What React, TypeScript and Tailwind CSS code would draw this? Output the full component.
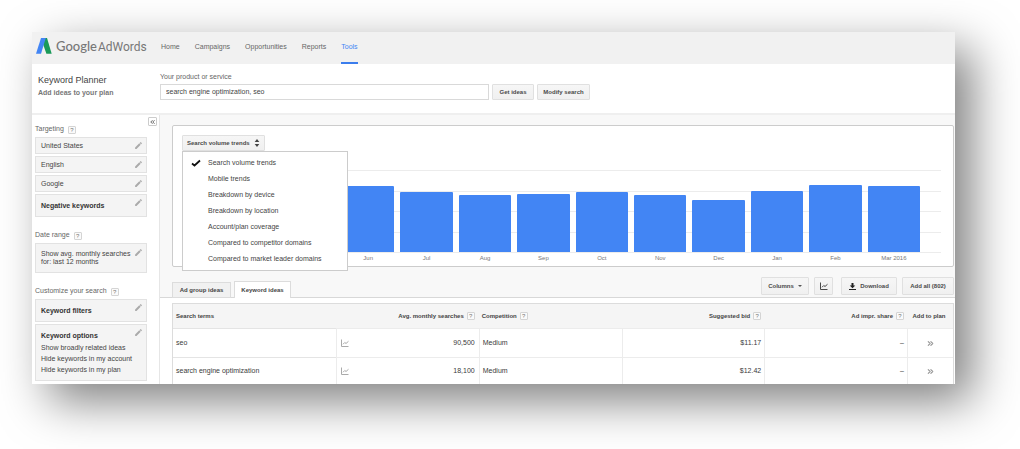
import React from "react";
import { ChevronsLeft, ChevronsRight } from "lucide-react";
import { MdEdit } from "react-icons/md";

const navItems = ["Home", "Campaigns", "Opportunities", "Reports", "Tools"];

const menuItems = [
  "Search volume trends",
  "Mobile trends",
  "Breakdown by device",
  "Breakdown by location",
  "Account/plan coverage",
  "Compared to competitor domains",
  "Compared to market leader domains",
];

const trendData = [
  { month: "Jun", value: 81 },
  { month: "Jul", value: 73 },
  { month: "Aug", value: 70 },
  { month: "Sep", value: 71 },
  { month: "Oct", value: 73 },
  { month: "Nov", value: 70 },
  { month: "Dec", value: 64 },
  { month: "Jan", value: 75 },
  { month: "Feb", value: 82 },
  { month: "Mar 2016", value: 81 },
];

const keywordRows = [
  { term: "seo", searches: "90,500", competition: "Medium", bid: "$11.17" },
  {
    term: "search engine optimization",
    searches: "18,100",
    competition: "Medium",
    bid: "$12.42",
  },
];

const buttonStyle =
  "flex items-center justify-center border border-[#e0e0e0] bg-linear-to-b from-[#f6f6f6] to-[#f0f0f0] text-[6px] font-bold text-[#4a4a4a] rounded-[1px]";

function AdWordsLogo() {
  return (
    <svg viewBox="0 0 16 16" className="h-4 w-4" aria-hidden="true">
      <path d="M6.500 0H11l4.700 15.800H10.400L7 6z" fill="#1b9a59" />
      <path d="M5 0h4.800L5 15.800H0z" fill="#4285f4" />
    </svg>
  );
}

function LineChartIcon({ class_name }: { class_name: string }) {
  return (
    <svg viewBox="0 0 16 16" className={class_name} fill="none" stroke="currentColor" aria-hidden="true">
      <path d="M1 1v14h14" strokeWidth="2" />
      <path d="M4 10.500 7.500 7l2.500 2L15 4.500" strokeWidth="2" />
    </svg>
  );
}

function HelpBadge({ label }: { label: string }) {
  return (
    <button
      type="button"
      aria-label={`Help: ${label}`}
      className="inline-flex h-2 w-2 shrink-0 items-center justify-center rounded-[1px] border border-[#d4d4d4] bg-[#fafafa] text-[6px] leading-none font-normal text-[#777]"
    >
      ?
    </button>
  );
}

function SideTitle({ text, class_name = "" }: { text: string; class_name?: string }) {
  return (
    <h3 className={`flex h-[15px] items-center gap-1 text-[#666] ${class_name}`}>
      {text}
      <HelpBadge label={text} />
    </h3>
  );
}

function SideCard({
  label,
  class_name,
  children,
}: {
  label: string;
  class_name: string;
  children: React.ReactNode;
}) {
  return (
    <div
      className={`flex items-start justify-between border border-[#e2e2e2] bg-[#f4f4f4] pl-[5px] pr-[3px] ${class_name}`}
    >
      <div>{children}</div>
      <button type="button" aria-label={`Edit ${label}`} className="mt-[3px] shrink-0">
        <MdEdit className="h-[9px] w-[9px] text-[#aaa]" />
      </button>
    </div>
  );
}

function TopBar() {
  return (
    <header className="flex h-8 items-stretch bg-[#f1f1f1]">
      <a href="#" className="flex w-[129px] shrink-0 items-center gap-1 pl-1 pb-1 text-[#777]">
        <AdWordsLogo />
        <span className="flex items-baseline gap-px whitespace-nowrap text-[12px] leading-4">
          <span className="font-['Lato'] text-[13px] font-medium">Google</span>
          <span className="font-['Roboto']">AdWords</span>
        </span>
      </a>
      <nav className="flex items-stretch gap-[15px]">
        {navItems.map((item) => (
          <a
            key={item}
            href="#"
            className={`flex items-center border-b-2 pt-px pb-px ${
              item === "Tools" ? "border-[#3b7ded] text-[#4285f4]" : "border-transparent text-[#666]"
            }`}
          >
            {item}
          </a>
        ))}
      </nav>
    </header>
  );
}

function SearchBar() {
  return (
    <section className="flex h-[51px] border-b-2 border-[#efefef] bg-white">
      <div className="w-32 shrink-0 pl-[6px] pt-[10px]">
        <h1 className="text-[9px] leading-3 text-[#444]">Keyword Planner</h1>
        <h2 className="mt-[2px] leading-[10px] font-bold text-[#777]">Add ideas to your plan</h2>
      </div>
      <form className="flex-1 pt-2" onSubmit={(e) => e.preventDefault()}>
        <label htmlFor="product" className="block h-3 leading-[10px] text-[#666]">
          Your product or service
        </label>
        <div className="flex h-4 items-stretch gap-[3px]">
          <input
            id="product"
            type="text"
            defaultValue="search engine optimization, seo"
            className="w-[329px] border border-[#d9d9d9] bg-white px-[5px] text-[7px] text-[#444]"
          />
          <button type="submit" className={`${buttonStyle} w-[42px]`}>
            Get ideas
          </button>
          <button type="button" className={`${buttonStyle} w-[53px]`}>
            Modify search
          </button>
        </div>
      </form>
    </section>
  );
}

function Sidebar() {
  return (
    <aside className="flex w-32 shrink-0 flex-col border-r border-[#e6e6e6] bg-white pl-[3px] pr-[2px] pt-[2px] pb-[2px]">
      <button
        type="button"
        aria-label="Collapse sidebar"
        className="flex h-[9px] w-[9px] items-center justify-center self-end rounded-[1px] border border-[#ccc] text-[#555]"
      >
        <ChevronsLeft className="h-2 w-2" strokeWidth={3} />
      </button>
      <div className="mr-[10px]">
        <SideTitle text="Targeting" class_name="-mt-1" />
        <div className="flex flex-col gap-[2px]">
          {["United States", "English", "Google"].map((item) => (
            <SideCard key={item} label={item} class_name="h-[17px] leading-[15px]">
              {item}
            </SideCard>
          ))}
          <SideCard label="Negative keywords" class_name="h-[23px] leading-[21px] font-bold text-[#333]">
            Negative keywords
          </SideCard>
        </div>

        <SideTitle text="Date range" class_name="mt-[11px]" />
        <SideCard label="date range" class_name="h-[30px] pt-px leading-2">
          <p className="pt-[5px]">
            Show avg. monthly searches
            <br />
            for: last 12 months
          </p>
        </SideCard>

        <SideTitle text="Customize your search" class_name="mt-[11px]" />
        <div className="flex flex-col gap-[2px]">
          <SideCard label="keyword filters" class_name="h-[23px] leading-[21px] font-bold text-[#333]">
            Keyword filters
          </SideCard>
          <SideCard label="keyword options" class_name="h-[57px] leading-[11px]">
            <h4 className="pt-[5px] leading-3 font-bold text-[#333]">Keyword options</h4>
            <p>Show broadly related ideas</p>
            <p>Hide keywords in my account</p>
            <p>Hide keywords in my plan</p>
          </SideCard>
        </div>
      </div>
    </aside>
  );
}

function TrendMenu() {
  return (
    <div className="relative w-fit">
      <button type="button" aria-haspopup="menu" aria-expanded="true" className={`${buttonStyle} h-4 gap-1 px-1`}>
        Search volume trends
        <svg viewBox="0 0 8 12" className="h-2 w-[6px]" fill="#444" aria-hidden="true">
          <path d="M4 0 7.500 4.500H.5zM4 12 .5 7.500h7z" />
        </svg>
      </button>
      <ul
        role="menu"
        className="absolute left-0 top-full z-10 w-[166px] border border-[#ccc] bg-white py-[3px] text-[#444]"
      >
        {menuItems.map((item, key) => (
          <li key={item} role="none">
            <button
              type="button"
              role="menuitemradio"
              aria-checked={key === 0}
              className="flex h-4 w-full items-center text-left"
            >
              <span className="w-[25px] pl-2">
                {key === 0 && (
                  <svg viewBox="0 0 10 8" className="h-2 w-[10px]" fill="none" stroke="#111" aria-hidden="true">
                    <path d="M1 4.500 3.500 6.500 9 1.500" strokeWidth="1.800" />
                  </svg>
                )}
              </span>
              {item}
            </button>
          </li>
        ))}
      </ul>
    </div>
  );
}

function TrendChart() {
  return (
    <div className="relative mt-[19px] mr-3">
      {/* grid lines run behind the bars */}
      <div className="absolute inset-x-0 top-0 flex h-[83px] flex-col justify-between">
        {[0, 1, 2, 3, 4].map((line) => (
          <div key={line} className="h-px bg-[#ececec]" />
        ))}
      </div>
      <div className="relative ml-[160px] mr-[21px] flex gap-[6px]">
        {trendData.map(({ month, value }) => (
          <div key={month} className="flex-1">
            <div className="flex h-[82px] items-end">
              <div className="w-full rounded-t-[1px] bg-[#4285f4]" style={{ height: `${value}%` }} />
            </div>
            <p className="text-center text-[6px] leading-3 text-[#777]">{month}</p>
          </div>
        ))}
      </div>
    </div>
  );
}

function IdeasToolbar() {
  return (
    <div className="flex items-end justify-between pl-3">
      <div className="-mb-px flex items-end gap-[3px] text-[6px] font-bold text-[#444]">
        <button type="button" className="h-4 w-[59px] border border-[#dcdcdc] bg-[#f1f1f1]">
          Ad group ideas
        </button>
        <button type="button" className="h-[17px] w-[57px] border border-b-0 border-[#dcdcdc] bg-white">
          Keyword ideas
        </button>
      </div>
      <div className="mr-px mb-[2px] flex h-[18px] items-stretch">
        <button type="button" className={`${buttonStyle} w-12 gap-1`}>
          Columns
          <svg viewBox="0 0 8 4" className="h-[2px] w-1" fill="#555" aria-hidden="true">
            <path d="M0 0h8L4 4z" />
          </svg>
        </button>
        <button type="button" aria-label="Show chart" className={`${buttonStyle} ml-[5px] w-[19px]`}>
          <LineChartIcon class_name="h-2 w-2" />
        </button>
        <button type="button" className={`${buttonStyle} ml-2 w-14 gap-1`}>
          <svg viewBox="0 0 14 14" className="h-[7px] w-[7px]" fill="#222" aria-hidden="true">
            <path d="M5 0h4v5h3.500L7 10.500 1.500 5H5zM0 12h14v2H0z" />
          </svg>
          Download
        </button>
        <button type="button" className={`${buttonStyle} ml-[5px] w-[52px]`}>
          Add all (802)
        </button>
      </div>
    </div>
  );
}

function KeywordTable() {
  const head = "h-6 px-0 align-middle text-[6px] font-bold text-[#444]";
  const cell = "h-[29px] border-l border-[#ececec] align-middle";
  return (
    <table className="w-full table-fixed border-separate border-spacing-0 border border-b-0 border-[#dcdcdc] text-[#3a3a3a]">
      <colgroup>
        <col className="w-[163px]" />
        <col />
        <col />
        <col />
        <col />
        <col className="w-[46px]" />
      </colgroup>
      <thead className="bg-[#f5f5f5]">
        <tr>
          <th className={`${head} pl-[3px] text-left`}>Search terms</th>
          <th className={`${head} pr-1`}>
            <span className="flex items-center justify-end gap-[3px]">
              Avg. monthly searches <HelpBadge label="Avg. monthly searches" />
            </span>
          </th>
          <th className={`${head} pl-[3px]`}>
            <span className="flex items-center gap-[3px]">
              Competition <HelpBadge label="Competition" />
            </span>
          </th>
          <th className={`${head} pr-[3px]`}>
            <span className="flex items-center justify-end gap-[3px]">
              Suggested bid <HelpBadge label="Suggested bid" />
            </span>
          </th>
          <th className={`${head} pr-[3px]`}>
            <span className="flex items-center justify-end gap-[3px]">
              Ad impr. share <HelpBadge label="Ad impr. share" />
            </span>
          </th>
          <th className={`${head} pr-[2px] text-center whitespace-nowrap`}>Add to plan</th>
        </tr>
      </thead>
      <tbody>
        {keywordRows.map(({ term, searches, competition, bid }) => (
          <tr key={term} className="*:border-t last:*:h-[27px]">
            <td className="h-[29px] border-[#e4e4e4] pl-[3px] align-middle">{term}</td>
            <td className={`${cell} pl-1 pr-1`}>
              <span className="flex items-center justify-between">
                <LineChartIcon class_name="h-2 w-2 text-[#aaa]" />
                {searches}
              </span>
            </td>
            <td className={`${cell} pl-[3px]`}>{competition}</td>
            <td className={`${cell} pr-[3px] text-right`}>{bid}</td>
            <td className={`${cell} pr-[3px] text-right`}>–</td>
            <td className={cell}>
              <button type="button" aria-label={`Add ${term} to plan`} className="mx-auto block">
                <ChevronsRight className="h-[9px] w-[9px] text-[#999]" strokeWidth={3} />
              </button>
            </td>
          </tr>
        ))}
      </tbody>
    </table>
  );
}

function App() {
  return (
    <div className="bg-white pt-8 pr-[65px] pb-[65px] pl-8 font-['Liberation_Sans',Arial,sans-serif] text-[7px] text-[#444]">
      <div className="overflow-hidden bg-white shadow-[17px_17px_44px_rgba(0,0,0,0.5)]">
        <TopBar />
        <SearchBar />
        <div className="flex">
          <Sidebar />
          <main className="min-w-0 flex-1">
            <div className="border-b border-[#d8d8d8] bg-[#f8f8f8] pt-[10px]">
              <section className="ml-3 mr-px rounded-[2px] border border-[#ccc] bg-white pl-[9px] pt-[9px] pb-[2px]">
                <TrendMenu />
                <TrendChart />
              </section>
              <div className="pt-[10px]">
                <IdeasToolbar />
              </div>
            </div>
            <div className="bg-white pl-3 pr-px pt-[5px]">
              <KeywordTable />
            </div>
          </main>
        </div>
      </div>
    </div>
  );
}

export default App;
